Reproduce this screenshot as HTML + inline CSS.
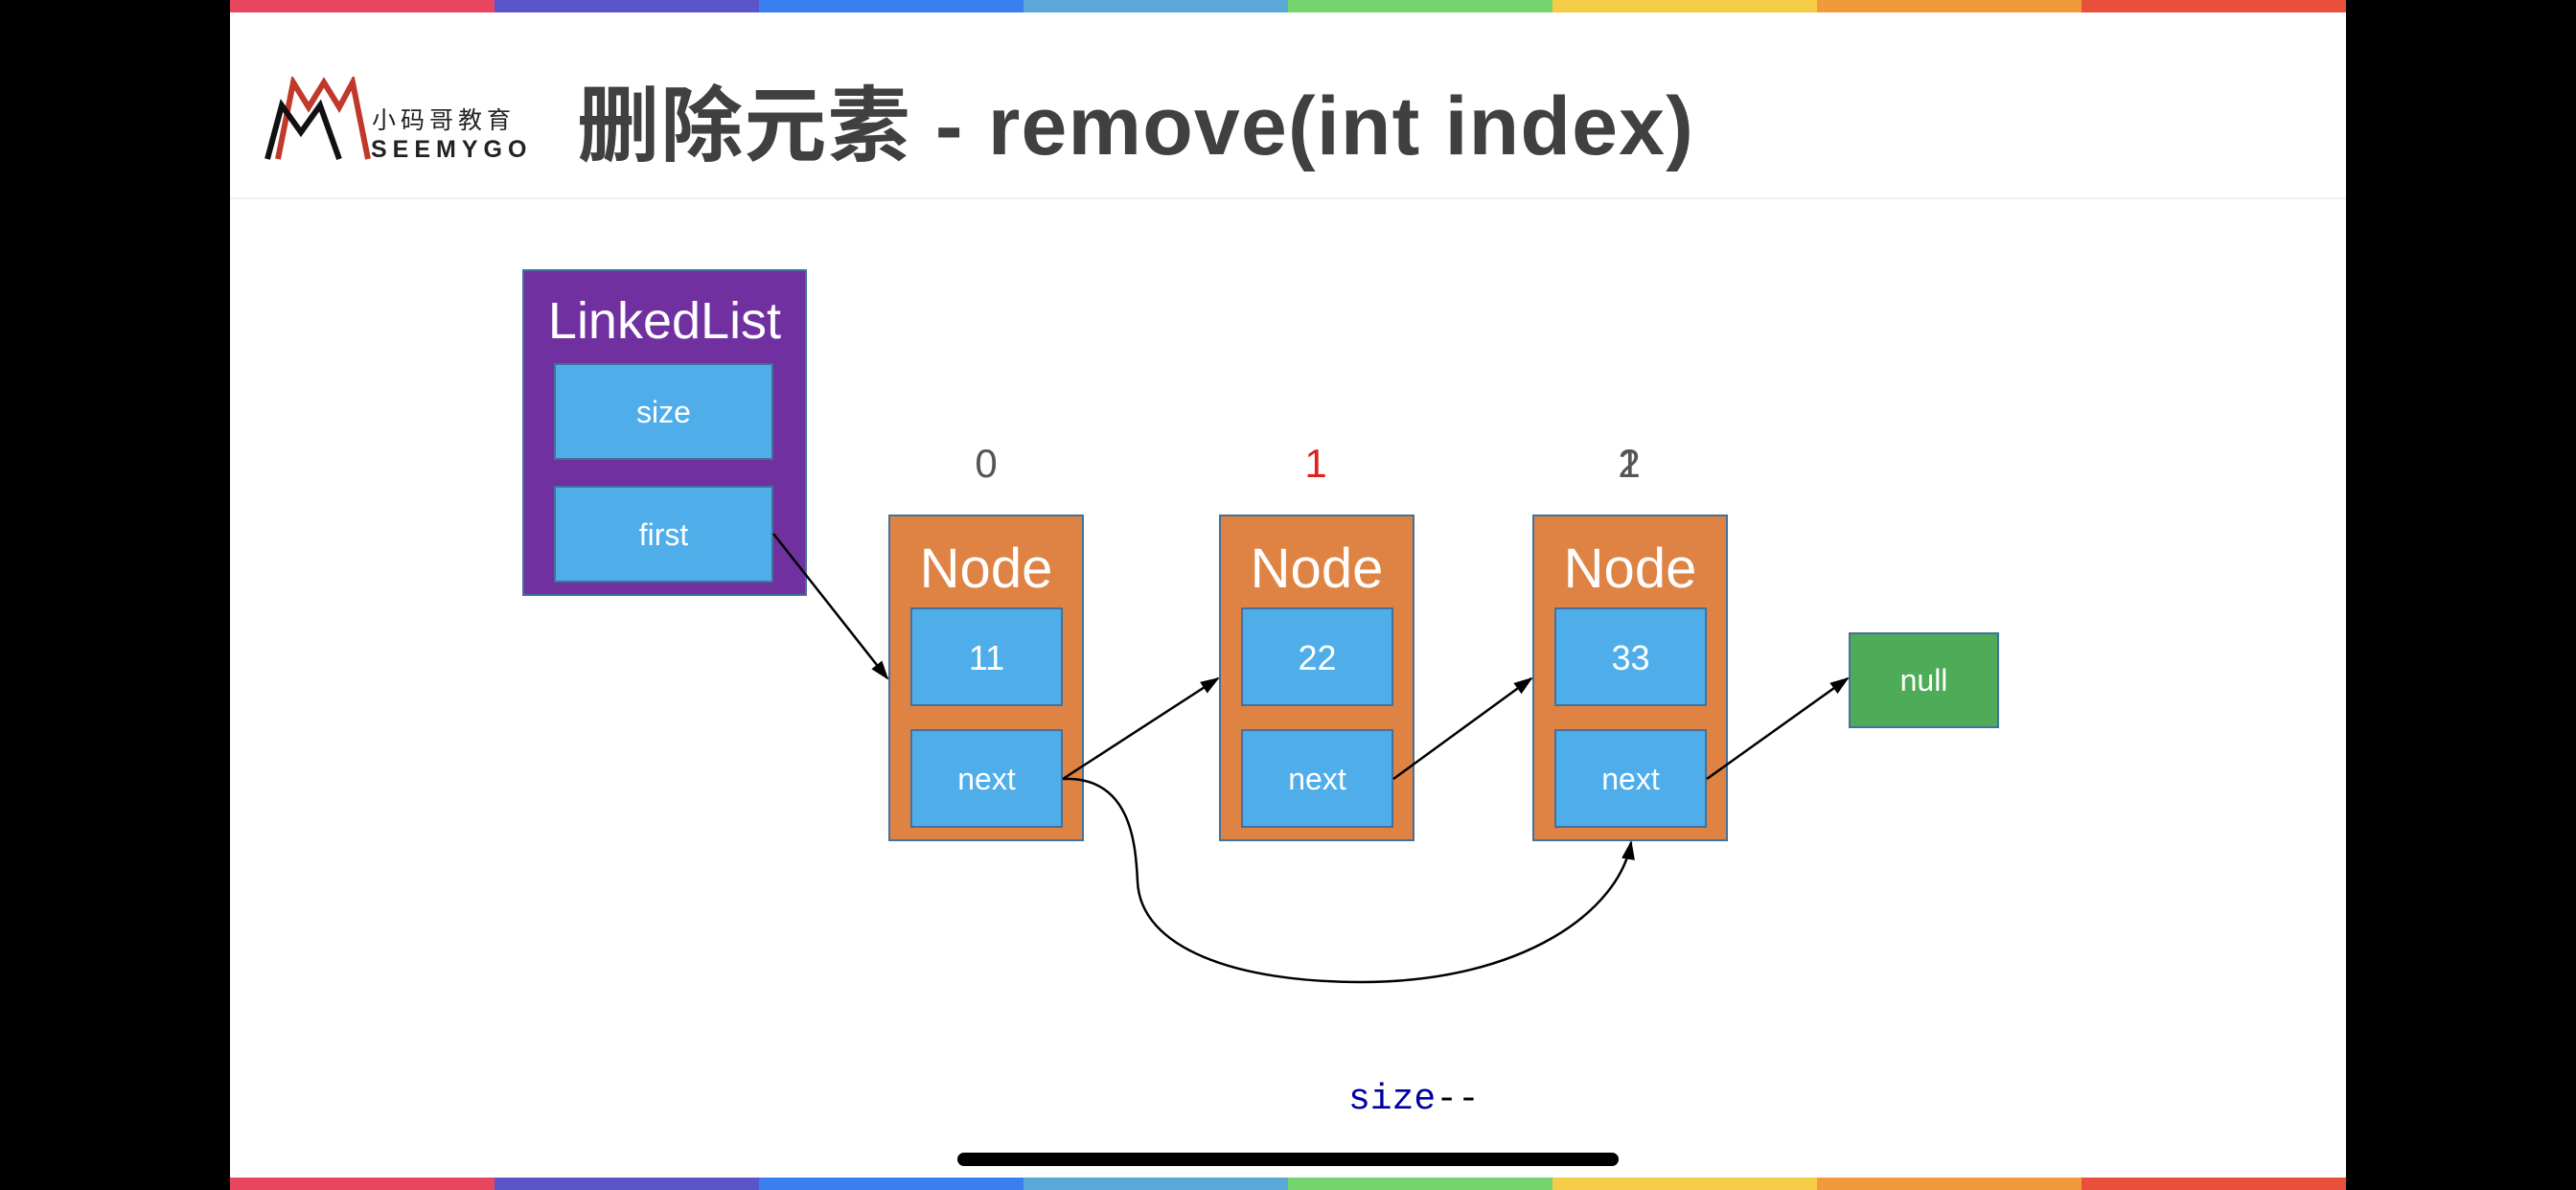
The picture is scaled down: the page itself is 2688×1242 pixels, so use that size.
<!DOCTYPE html>
<html><head><meta charset="utf-8"><style>
*{margin:0;padding:0;box-sizing:border-box}
body{width:2688px;height:1242px;background:#000;position:relative;overflow:hidden;font-family:"Liberation Sans","Noto Sans CJK SC",sans-serif}
.page{position:absolute;left:240px;top:0;width:2208px;height:1242px;background:#fff;overflow:hidden}
.bar{position:absolute;left:0;width:2208px;height:13px;display:flex}
.bar div{flex:1}
.box{position:absolute;border:2px solid #41719c}
.t{position:absolute;color:#fff;text-align:center;font-family:"Liberation Sans",sans-serif}
.idx{position:absolute;font-family:"Liberation Sans",sans-serif;font-size:42px;color:#555;width:60px;text-align:center}
</style></head><body>
<div class="page">
<div class="bar" style="top:0"><div style="background:#e8465f"></div><div style="background:#5a55c9"></div><div style="background:#3a7ff0"></div><div style="background:#5aa8d8"></div><div style="background:#76d46e"></div><div style="background:#f5cc45"></div><div style="background:#f09a3c"></div><div style="background:#e8503c"></div></div>
<div class="bar" style="top:1229px"><div style="background:#e8465f"></div><div style="background:#5a55c9"></div><div style="background:#3a7ff0"></div><div style="background:#5aa8d8"></div><div style="background:#76d46e"></div><div style="background:#f5cc45"></div><div style="background:#f09a3c"></div><div style="background:#e8503c"></div></div>
<div style="position:absolute;left:0;top:206px;width:2208px;height:2px;background:#f0f0f0"></div>

<svg style="position:absolute;left:36px;top:80px" width="112" height="90" viewBox="0 0 112 90">
<polyline points="14,86 30,6 46,32 62,6 78,32 92,6 108,86" fill="none" stroke="#c0392b" stroke-width="6"/>
<polyline points="3,86 18,30 38,58 58,30 78,86" fill="none" stroke="#111" stroke-width="6"/>
</svg>
<div style="position:absolute;left:148px;top:106px;font-size:25px;color:#222;letter-spacing:5px;font-family:'Noto Sans CJK SC',sans-serif">小码哥教育</div>
<div style="position:absolute;left:147px;top:142px;font-size:25px;color:#222;letter-spacing:6px;font-weight:bold">SEEMYGO</div>
<div style="position:absolute;left:362px;top:82px;font-size:86px;font-weight:bold;color:#404040;line-height:100px;font-family:'Liberation Sans','Noto Sans CJK SC',sans-serif;letter-spacing:1.2px">删除元素 - remove(int index)</div>

<!-- LinkedList -->
<div class="box" style="left:305px;top:281px;width:297px;height:341px;background:#7030a0"></div>
<div class="t" style="left:305px;top:304px;width:297px;font-size:54px">LinkedList</div>
<div class="box" style="left:338px;top:379px;width:229px;height:101px;background:#4faeea"></div>
<div class="t" style="left:338px;top:412px;width:229px;font-size:32px">size</div>
<div class="box" style="left:338px;top:507px;width:229px;height:101px;background:#4faeea"></div>
<div class="t" style="left:338px;top:540px;width:229px;font-size:32px">first</div>

<!-- Nodes -->
<div class="idx" style="left:759px;top:460px">0</div>
<div class="idx" style="left:1103px;top:460px;color:#e02020">1</div>
<div class="idx" style="left:1430px;top:460px">2</div>
<div class="idx" style="left:1430px;top:460px">1</div>

<div class="box" style="left:687px;top:537px;width:204px;height:341px;background:#df8344"></div>
<div class="t" style="left:687px;top:560px;width:204px;font-size:58px">Node</div>
<div class="box" style="left:710px;top:634px;width:159px;height:103px;background:#4faeea"></div>
<div class="t" style="left:710px;top:666px;width:159px;font-size:36px">11</div>
<div class="box" style="left:710px;top:761px;width:159px;height:103px;background:#4faeea"></div>
<div class="t" style="left:710px;top:795px;width:159px;font-size:32px">next</div>

<div class="box" style="left:1032px;top:537px;width:204px;height:341px;background:#df8344"></div>
<div class="t" style="left:1032px;top:560px;width:204px;font-size:58px">Node</div>
<div class="box" style="left:1055px;top:634px;width:159px;height:103px;background:#4faeea"></div>
<div class="t" style="left:1055px;top:666px;width:159px;font-size:36px">22</div>
<div class="box" style="left:1055px;top:761px;width:159px;height:103px;background:#4faeea"></div>
<div class="t" style="left:1055px;top:795px;width:159px;font-size:32px">next</div>

<div class="box" style="left:1359px;top:537px;width:204px;height:341px;background:#df8344"></div>
<div class="t" style="left:1359px;top:560px;width:204px;font-size:58px">Node</div>
<div class="box" style="left:1382px;top:634px;width:159px;height:103px;background:#4faeea"></div>
<div class="t" style="left:1382px;top:666px;width:159px;font-size:36px">33</div>
<div class="box" style="left:1382px;top:761px;width:159px;height:103px;background:#4faeea"></div>
<div class="t" style="left:1382px;top:795px;width:159px;font-size:32px">next</div>

<div class="box" style="left:1689px;top:660px;width:157px;height:100px;background:#4eab58"></div>
<div class="t" style="left:1689px;top:692px;width:157px;font-size:32px">null</div>

<svg style="position:absolute;left:0;top:0" width="2208" height="1242">
<defs><marker id="b" markerWidth="20" markerHeight="20" refX="18" refY="10" orient="auto" markerUnits="userSpaceOnUse" viewBox="0 0 20 20"><path d="M0,3 L20,10 L0,17 z" fill="#000"/></marker></defs>
<g stroke="#000" stroke-width="2.5" fill="none">
<line x1="567" y1="557" x2="686" y2="708" marker-end="url(#b)"/>
<line x1="869" y1="813" x2="1031" y2="708" marker-end="url(#b)"/>
<line x1="1214" y1="813" x2="1358" y2="708" marker-end="url(#b)"/>
<line x1="1541" y1="813" x2="1688" y2="708" marker-end="url(#b)"/>
<path d="M869,813 C940,810 945,880 947,920 C950,990 1050,1025 1180,1025 C1350,1025 1450,950 1462,879" marker-end="url(#b)"/>
</g>
</svg>

<div style="position:absolute;left:1167px;top:1126px;font-family:'Liberation Mono',monospace;font-size:38px;color:#0000a0">size<span style="color:#000">--</span></div>
</div>
<div style="position:absolute;left:999px;top:1203px;width:690px;height:14px;border-radius:7px;background:#000"></div>
</body></html>
